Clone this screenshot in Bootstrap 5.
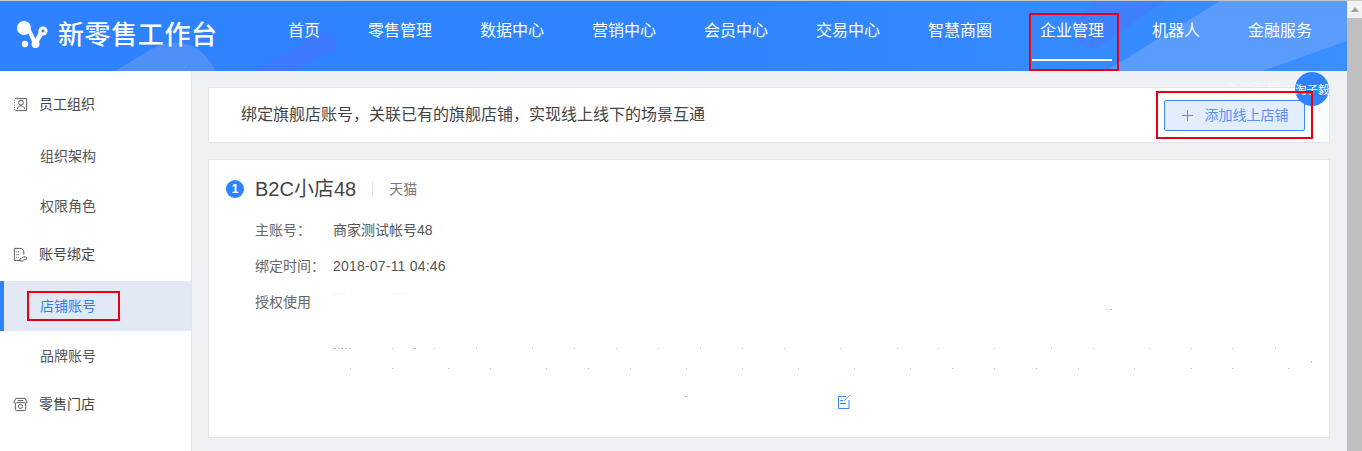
<!DOCTYPE html>
<html lang="zh">
<head>
<meta charset="utf-8">
<title>新零售工作台</title>
<link rel="stylesheet" href="https://cdn.jsdelivr.net/npm/bootstrap@5.3.0/dist/css/bootstrap.min.css">
<style>
html,body{height:451px;overflow:hidden}
body{font-family:"Liberation Sans","Noto Sans CJK SC",sans-serif;background:#eff1f5;color:#333;border-top:1px solid #c8c8c8;font-size:14px}
.shell{width:1347px;height:450px;overflow:hidden;position:relative}
.topbar{height:70px;background:linear-gradient(90deg,#2e82ff 0,#2f84ff 50%,#3a8eff 100%);position:relative;overflow:hidden}
.topbar-art{position:absolute;inset:0;width:100%;height:100%}
.brand-area{width:264px;height:68px;padding-left:16px;position:relative}
.brand-name{font-size:26px;color:#fff;letter-spacing:.6px;line-height:1;margin-left:9px;font-weight:500}
.top-menu{position:relative;height:70px}
.top-item{display:block;color:#fff;font-size:16px;text-decoration:none;line-height:59px;height:60px;position:relative;text-align:center;width:112px}
.top-item.w-robot{width:96px}
.top-item.short{width:80px}
.top-item.current::after{content:"";position:absolute;left:16px;right:16px;top:58px;height:2px;background:#fff}
.mark-box{position:absolute;border:2px solid #e60012;pointer-events:none;z-index:5}
.mark-nav{left:1029px;top:12px;width:90px;height:58px}
.mark-add{left:1156px;top:90px;width:157px;height:48px}
.mark-side{left:27px;top:290px;width:93px;height:30px}
.side{width:192px;height:380px;background:#fff;border-right:1px solid #e4e6eb;flex:none;position:relative;padding-top:10px}
.side-head{height:50px;display:flex;align-items:center;padding:0 0 4px 13px;color:#444;font-size:14px}
.side-head svg{margin-right:11px;flex:none}
.side-link{display:block;height:50px;line-height:50px;padding-left:40px;color:#555;text-decoration:none;font-size:14px}
.side-link.on{background:#e2e9f5;color:#2e7dff;border-left:4px solid #2e84ff;padding-left:36px}
.main-col{flex:1;padding:16px 17px 0 16px;min-width:0;position:relative}
.faded{position:absolute;left:996px;top:10px;font-size:14px;line-height:16px;color:#f8f9fb;white-space:nowrap;display:flex;align-items:center;gap:10px}
.notice{height:56px;background:#fff;border:1px solid #e2e4e9;padding:0 24px 0 32px;position:relative}
.notice-text{font-size:16px;color:#444}
.add-btn{width:141px;height:31px;background:#e3eefd;border:1px solid #3d8bff;border-radius:2px;color:#5a8ff5;font-size:14px;padding:0 0 0 1px;--bs-btn-hover-bg:#e3eefd;--bs-btn-hover-color:#5a8ff5;--bs-btn-hover-border-color:#3d8bff}
.add-btn svg{margin-right:12px}
.store{height:279px;background:#fff;border:1px solid #e2e4e9;margin-top:16px;padding:17px 0 0 17px;position:relative}
.store-head{margin-bottom:11px}
.num{width:18px;height:18px;border-radius:50%;background:#2e84ff;color:#fff;font-size:12px;font-weight:700;line-height:18px;text-align:center;flex:none}
.store-name{font-size:20px;color:#444;margin-left:11px;line-height:24px}
.store-sep{width:1px;height:15px;background:#e8e8e8;margin:0 16px}
.store-type{font-size:14px;color:#777}
.info-row{display:flex;margin-left:29px;font-size:14px;height:36px;align-items:center;color:#666}
.info-label{width:78px;flex:none}
.info-colon{font-family:"Noto Sans CJK TC",sans-serif}
.info-val{color:#555}
.info-date{letter-spacing:.2px}
.specks{position:absolute;left:0;top:0;pointer-events:none}
.avatar{position:absolute;left:1295px;top:71px;width:34px;height:34px;border-radius:50%;background:#2e84ff;color:#fff;font-size:11.5px;line-height:36px;white-space:nowrap;text-align:center;z-index:4}
.rail{position:fixed;right:0;top:1px;bottom:0;width:15px;background:#f1f1f1}
.rail::before{content:"";position:absolute;top:17px;left:0;right:0;bottom:0;background:#bfbfbf}
.rail::after{content:"";position:absolute;top:6px;left:4px;border:4px solid transparent;border-top:0;border-bottom:5px solid #a3a3a3}
</style>
</head>
<body>
<div class="shell">
  <header class="topbar d-flex align-items-start">
    <svg class="topbar-art" viewBox="0 0 1347 70" preserveAspectRatio="none" aria-hidden="true">
      <path d="M115 70 L157 45 Q172 41 182 42 Q198 45 207 57 Q213 64 216 70Z" fill="#4f8ff8"/>
      <path d="M255 70 L314 35 Q326 28 335 38 Q340 46 331 52 L291 70Z" fill="#3d7aff"/>
      <path d="M1220 0 H1347 V40 L1262 70 H1106Z" fill="#5a9cfb"/>
      <path d="M1096 0 H1165 L1100 45 Q1082 52 1076 34 Q1073 22 1085 12Z" fill="#3f80ff"/>
    </svg>
    <div class="brand-area d-flex align-items-center">
      <svg width="33" height="28" viewBox="0 0 33 28" aria-hidden="true">
        <g fill="#fff">
          <circle cx="8" cy="7" r="7"/>
          <circle cx="27" cy="10" r="4.6"/>
          <circle cx="9" cy="23" r="3.2"/>
          <circle cx="19.5" cy="23" r="4"/>
          <path d="M11 9 L15 9 L21 21 L17 23Z"/>
          <path d="M24 9 L28 12 L21 24 L17 22Z"/>
        </g>
        <circle cx="27" cy="10" r="1.6" fill="#2e84ff"/>
      </svg>
      <span class="brand-name">新零售工作台</span>
    </div>
    <nav class="top-menu d-flex">
      <a class="top-item short" href="#">首页</a>
      <a class="top-item" href="#">零售管理</a>
      <a class="top-item" href="#">数据中心</a>
      <a class="top-item" href="#">营销中心</a>
      <a class="top-item" href="#">会员中心</a>
      <a class="top-item" href="#">交易中心</a>
      <a class="top-item" href="#">智慧商圈</a>
      <a class="top-item current" href="#">企业管理</a>
      <a class="top-item w-robot" href="#">机器人</a>
      <a class="top-item" href="#">金融服务</a>
    </nav>
  </header>
  <div class="d-flex">
    <aside class="side">
      <div class="side-head">
        <svg width="15" height="15" viewBox="0 0 16 16" fill="none" stroke="#555" stroke-width="1"><path d="M2.5 1.5H14.5V14.5H2.5"/><path d="M1 3.5H3M1 6H3M1 8.5H3M1 11H3M1 13.5H3" stroke-dasharray="1 1"/><circle cx="8.5" cy="6" r="2.6"/><path d="M4.5 13C5 10.5 6.5 9.5 8.5 9.5S12 10.5 12.5 13"/></svg>
        <span>员工组织</span>
      </div>
      <a class="side-link" href="#">组织架构</a>
      <a class="side-link" href="#">权限角色</a>
      <div class="side-head">
        <svg width="15" height="15" viewBox="0 0 16 16" fill="none" stroke="#555" stroke-width="1"><path d="M8 14.5H1.5V1.5H9L11.5 4V8"/><path d="M3.5 5H7M3.5 8H7M3.5 11H6" stroke-dasharray="1 1"/><path d="M9 12.5l2-2h2a1.5 1.5 0 0 1 0 3h-1M12 13.5l-2 1.5H8.5a1.4 1.4 0 0 1 0-2.8"/></svg>
        <span>账号绑定</span>
      </div>
      <a class="side-link on" href="#">店铺账号</a>
      <a class="side-link" href="#">品牌账号</a>
      <div class="side-head">
        <svg width="15" height="15" viewBox="0 0 16 16" fill="none" stroke="#555" stroke-width="1"><path d="M3 1.5H13L15 5.5C15 7 13 7 12.5 6H3.5C3 7 1 7 1 5.5Z"/><path d="M2.5 7V13.5C2.5 14 3 14.5 3.5 14.5H12.5C13 14.5 13.5 14 13.5 13.5V7"/><circle cx="8" cy="10" r="2.2"/><path d="M5 3.7H11"/></svg>
        <span>零售门店</span>
      </div>
    </aside>
    <main class="main-col">
      <div class="faded"><span>+</span><span>ⓘ 咨询客服</span></div>
      <section class="notice d-flex align-items-center justify-content-between">
        <span class="notice-text">绑定旗舰店账号，关联已有的旗舰店铺，实现线上线下的场景互通</span>
        <button type="button" class="btn add-btn d-flex align-items-center justify-content-center"><svg width="11" height="11" viewBox="0 0 11 11" aria-hidden="true"><path d="M5.5 0V11M0 5.5H11" stroke="#5a8ff5" fill="none"/></svg>添加线上店铺</button>
      </section>
      <section class="store">
        <div class="store-head d-flex align-items-center">
          <span class="num">1</span>
          <span class="store-name">B2C小店48</span>
          <span class="store-sep"></span>
          <span class="store-type">天猫</span>
        </div>
        <div class="info-row"><span class="info-label">主账号<span class="info-colon">：</span></span><span class="info-val">商家测试帐号48</span></div>
        <div class="info-row"><span class="info-label">绑定时间<span class="info-colon">：</span></span><span class="info-val info-date">2018-07-11 04:46</span></div>
        <div class="info-row"><span class="info-label">授权使用</span></div>
      </section>
    </main>
  </div>
  <svg class="specks" width="1347" height="450" viewBox="0 1 1347 450" aria-hidden="true" fill="#b8bcc6">
    <path d="M333 294H346M392 294H404" stroke="#f4f4f4" fill="none"/>
    <path d="M333 348h3v1h-3zM338 348h2v1h-2zM341 348h2v1h-2zM345 348h2v1h-2zM413 348h3v1h-3z"/>
    <path d="M350 348h1v1h-1zM392 348h1v1h-1zM434 348h1v1h-1zM476 348h1v1h-1zM532 348h1v1h-1zM574 348h1v1h-1zM616 348h1v1h-1zM658 348h1v1h-1zM700 348h1v1h-1zM742 348h1v1h-1zM784 348h1v1h-1zM840 348h1v1h-1zM897 348h1v1h-1zM938 348h1v1h-1zM994 348h1v1h-1zM1051 348h1v1h-1zM1093 348h1v1h-1zM1149 348h1v1h-1zM1191 348h1v1h-1zM1232 348h1v1h-1zM1275 348h1v1h-1z"/>
    <path d="M350 368h1v1h-1zM392 368h1v1h-1zM448 368h1v1h-1zM490 368h1v1h-1zM546 368h1v1h-1zM588 368h1v1h-1zM630 368h1v1h-1zM686 368h1v1h-1zM742 368h1v1h-1zM798 368h1v1h-1zM854 368h1v1h-1zM910 368h1v1h-1zM952 368h1v1h-1zM994 368h1v1h-1zM1036 368h1v1h-1zM1078 368h1v1h-1zM1134 368h1v1h-1zM1191 368h1v1h-1zM1232 368h1v1h-1zM1288 368h1v1h-1zM1311 361h1v2h-1zM1106 309h1v1h-1zM1110 309h2v1h-2zM685 396h2v1h-2z"/>
    <g fill="none" stroke="#3d84ff" stroke-width="1"><path d="M846 396.5H838.5V408.5H849V400"/><path d="M840 400.5H843M840 403.5H846"/><path d="M844 401L850 395" stroke="#7aa6ff"/></g>
  </svg>
  <div class="avatar">淘子毅</div>
  <div class="mark-box mark-nav"></div>
  <div class="mark-box mark-add"></div>
  <div class="mark-box mark-side"></div>
</div>
<div class="rail" aria-hidden="true"></div>
<script src="https://cdn.jsdelivr.net/npm/bootstrap@5.3.0/dist/js/bootstrap.bundle.min.js"></script>
</body>
</html>
